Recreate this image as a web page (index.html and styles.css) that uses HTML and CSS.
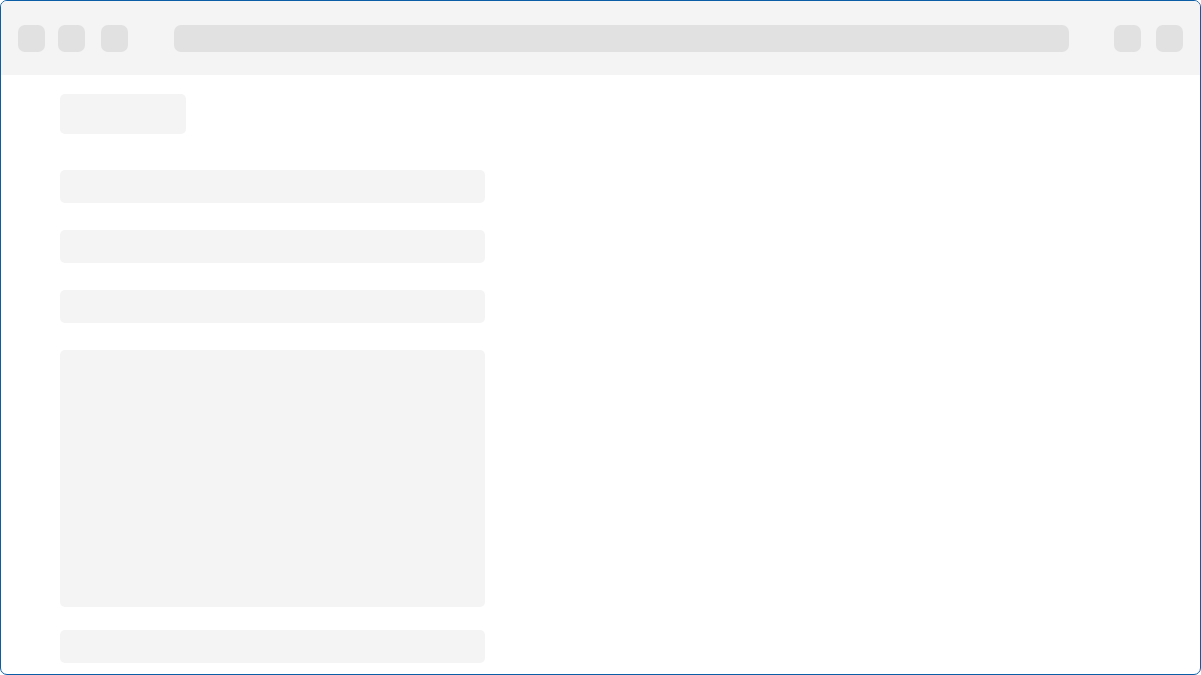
FILE: index.html
```html
<!DOCTYPE html>
<html>
<head>
<meta charset="utf-8">
<link rel="stylesheet" href="styles.css">
</head>
<body>
<div class="frame">
  <div class="toolbar">
    <div class="btn"></div>
    <div class="btn b2"></div>
    <div class="btn b3"></div>
    <div class="address"></div>
    <div class="btn"></div>
    <div class="btn b5"></div>
  </div>
  <div class="content">
    <div class="title"></div>
    <div class="bar first"></div>
    <div class="bar"></div>
    <div class="bar"></div>
    <div class="box"></div>
    <div class="bar last"></div>
  </div>
</div>
</body>
</html>
```

FILE: styles.css
```css
html, body {
  margin: 0;
  padding: 0;
  background: #ffffff;
  font-family: "Liberation Sans", Arial, sans-serif;
}
.frame {
  box-sizing: border-box;
  width: 1201px;
  height: 675px;
  border: 1px solid #0b5ea6;
  border-radius: 7px;
  overflow: hidden;
  background: #ffffff;
}
.toolbar {
  height: 74px;
  background: #f4f4f4;
  display: flex;
  align-items: flex-start;
  padding: 24px 17px 0 17px;
  box-sizing: border-box;
}
.btn {
  width: 27px;
  height: 27px;
  border-radius: 7px;
  background: #e1e1e1;
  flex: none;
}
.b2 { margin-left: 13px; }
.b3 { margin-left: 16px; }
.b5 { margin-left: 15px; }
.address {
  flex: 1;
  height: 27px;
  border-radius: 7px;
  background: #e1e1e1;
  margin: 0 45px 0 46px;
}
.content {
  padding: 19px 0 0 59px;
  display: flex;
  flex-direction: column;
  align-items: flex-start;
}
.title {
  width: 126px;
  height: 40px;
  border-radius: 5px;
  background: #f4f4f4;
}
.bar {
  width: 425px;
  height: 33px;
  border-radius: 5px;
  background: #f4f4f4;
  margin-top: 27px;
}
.bar.first { margin-top: 36px; }
.box {
  width: 425px;
  height: 257px;
  border-radius: 5px;
  background: #f4f4f4;
  margin-top: 27px;
}
.bar.last { margin-top: 23px; }
```
